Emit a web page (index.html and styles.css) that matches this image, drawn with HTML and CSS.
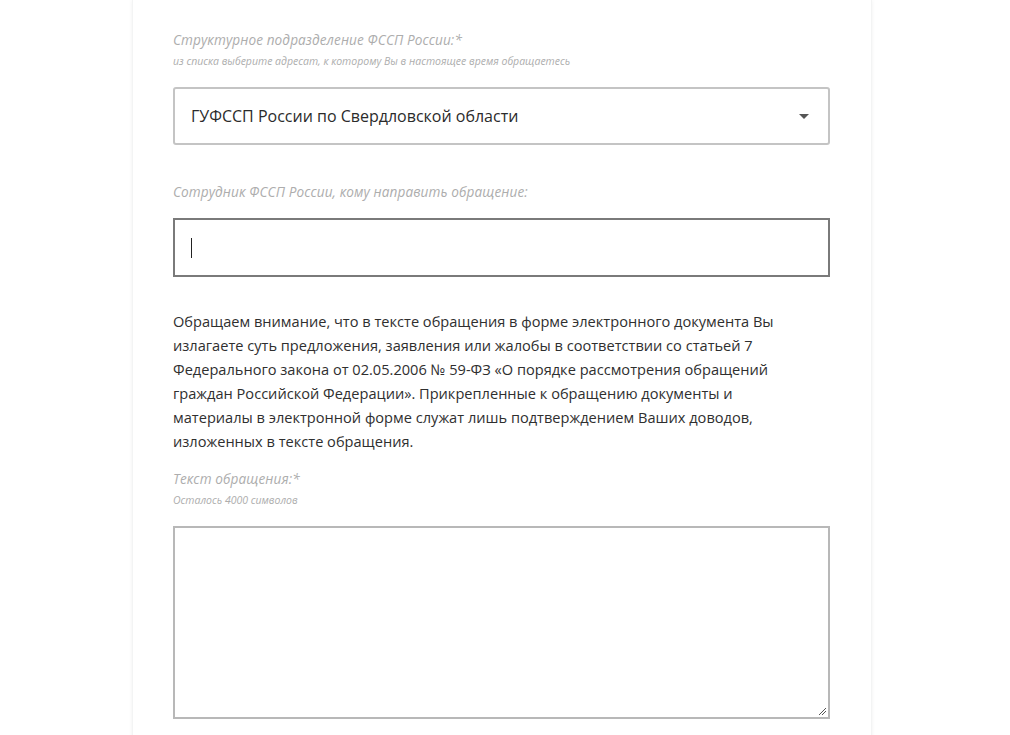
FILE: index.html
```html
<!DOCTYPE html>
<html lang="ru">
<head>
<meta charset="utf-8">
<title>Обращение</title>
<link rel="stylesheet" href="styles.css">
</head>
<body>
<div class="page">
  <main class="card">
    <div class="field">
      <div class="label">Структурное подразделение ФССП России:*</div>
      <div class="hint">из списка выберите адресат, к которому Вы в настоящее время обращаетесь</div>
      <div class="select">
        <span class="select-value">ГУФССП России по Свердловской области</span>
        <span class="caret"></span>
      </div>
    </div>
    <div class="field field-2">
      <div class="label">Сотрудник ФССП России, кому направить обращение:</div>
      <div class="input focused"><span class="cursor"></span></div>
    </div>
    <p class="notice">Обращаем внимание, что в тексте обращения в форме электронного документа Вы<br>излагаете суть предложения, заявления или жалобы в соответствии со статьей 7<br>Федерального закона от 02.05.2006 № 59-ФЗ «О порядке рассмотрения обращений<br>граждан Российской Федерации». Прикрепленные к обращению документы и<br>материалы в электронной форме служат лишь подтверждением Ваших доводов,<br>изложенных в тексте обращения.</p>
    <div class="field field-3">
      <div class="label">Текст обращения:*</div>
      <div class="hint">Осталось 4000 символов</div>
      <div class="textarea">
        <svg class="grip" width="10" height="10" viewBox="0 0 10 10"><path d="M9 2L2 9M9 5L5 9" stroke="#555" stroke-width="1" fill="none"/></svg>
      </div>
    </div>
  </main>
</div>
</body>
</html>
```
FILE: styles.css
```css
html, body {
  margin: 0;
  padding: 0;
  background: #ffffff;
  height: 100%;
  overflow: hidden;
}
body {
  font-family: "Open Sans", "Noto Sans", sans-serif;
  color: #333;
}
.page {
  display: flex;
  justify-content: flex-start;
  padding-left: 132px;
}
.card {
  width: 657px;
  padding: 30px 41px 40px 40px;
  background: #fff;
  box-shadow: 0 0 4px rgba(0,0,0,0.06);
  border-left: 1px solid #f3f4f4;
  border-right: 1px solid #f3f4f4;
  min-height: 760px;
}
.label {
  font-size: 13.6px;
  font-style: italic;
  color: #adadad;
  line-height: 20px;
  letter-spacing: 0.1px;
}
.hint {
  font-size: 10.5px;
  font-style: italic;
  color: #adadad;
  line-height: 14px;
  margin-top: 4px;
}
.select {
  margin-top: 19px;
  height: 54px;
  border: 2px solid #c4c4c4;
  border-radius: 3px;
  display: flex;
  align-items: center;
  justify-content: space-between;
  padding: 0 19px 0 16px;
}
.select-value {
  font-size: 16px;
  color: #2b2b2b;
}
.caret {
  width: 0;
  height: 0;
  border-left: 5px solid transparent;
  border-right: 5px solid transparent;
  border-top: 5px solid #555;
}
.field-2 {
  margin-top: 37px;
}
.input {
  margin-top: 16px;
  height: 55px;
  border: 2px solid #7a7a7a;
  display: flex;
  align-items: center;
  padding-left: 16px;
}
.cursor {
  width: 1px;
  height: 20px;
  background: #222;
}
.notice {
  margin: 32px 0 0 0;
  font-size: 14.6px;
  line-height: 24px;
  color: #2f2f2f;
}
.field-3 {
  margin-top: 16px;
}
.textarea {
  margin-top: 19px;
  height: 189px;
  border: 2px solid #b8b8b8;
  position: relative;
}
.grip {
  position: absolute;
  right: 1px;
  bottom: 1px;
}
```
